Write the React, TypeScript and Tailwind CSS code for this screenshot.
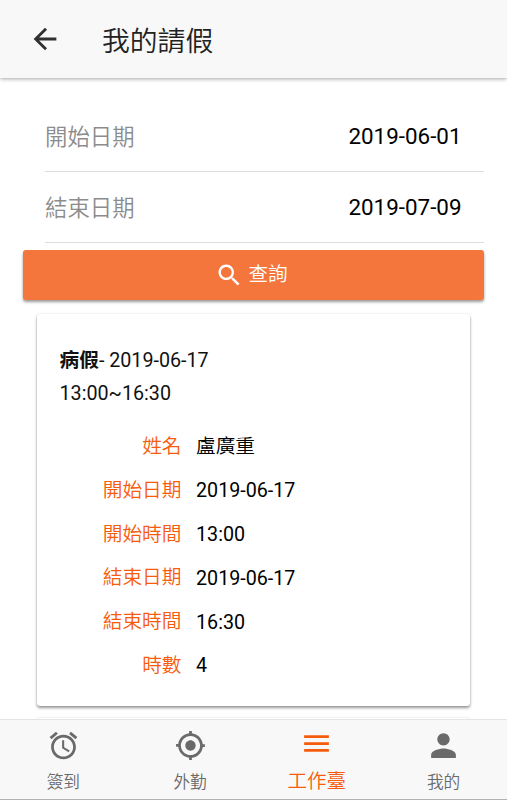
import type { ReactNode } from 'react';
import { IoMdAlarm, IoMdArrowBack, IoMdLocate, IoMdMenu, IoMdPerson, IoMdSearch } from 'react-icons/io';

const details = [
  ['姓名', '盧廣重'],
  ['開始日期', '2019-06-17'],
  ['開始時間', '13:00'],
  ['結束日期', '2019-06-17'],
  ['結束時間', '16:30'],
  ['時數', '4'],
];

function DateField({ label, value }: { label: string; value: string }) {
  return (
    <div className="flex h-[71.5px] items-center justify-between border-b-[1.5px] border-[#dedede] pr-[22.5px] text-[22.4px]">
      <span className="pt-[5px] font-[350] text-[#8c8c8c]">{label}</span>
      <span className="pt-[3px]">{value}</span>
    </div>
  );
}

function Tab({ icon, label, active = false }: { icon: ReactNode; label: string; active?: boolean }) {
  return (
    <a
      className={
        active
          ? 'flex flex-1 flex-col items-center pt-[5px] text-[19.5px] font-[350] text-[#f75c0c]'
          : 'flex flex-1 flex-col items-center pt-[7px] text-[16.7px] font-[350] text-[#6a6a6a]'
      }
    >
      <span className="flex h-9 shrink-0 items-center justify-center">{icon}</span>
      <span className={active ? 'leading-[42px]' : 'leading-[39px]'}>{label}</span>
    </a>
  );
}

export default function App() {
  return (
    <div className="flex h-[800px] w-full flex-col overflow-hidden bg-white font-['Roboto','Noto_Sans_CJK_TC',sans-serif] text-black">
      <header className="relative flex h-[78px] shrink-0 items-center bg-[#f8f8f8] pl-[28px] shadow-[0_1px_4px_rgba(0,0,0,0.35)]">
        <IoMdArrowBack size={36} color="#303030" className="w-[34px]" />
        <h1 className="ml-[40px] pt-[5px] text-[27.8px] font-[350] text-[#222]">我的請假</h1>
      </header>

      <main className="min-h-0 flex-1 overflow-hidden px-[23px] pt-[22px]">
        <section className="pl-[22px]">
          <DateField label="開始日期" value="2019-06-01" />
          <DateField label="結束日期" value="2019-07-09" />
        </section>

        <button className="mt-[6.5px] flex h-[50.5px] w-[461px] items-center justify-center gap-[5px] rounded-[3px] bg-[#f5763d] pr-[4px] text-[19.6px] text-white shadow-[0_2px_3px_rgba(0,0,0,0.4)]">
          <IoMdSearch size={28} />
          <span className="font-[350]">查詢</span>
        </button>

        <article className="mx-[14px] mt-[14px] h-[392px] w-[433px] rounded-[3px] px-[22.5px] pt-[31px] text-[19.7px] shadow-[0_2px_3px_rgba(0,0,0,0.4),0_0_2px_rgba(0,0,0,0.12)]">
          <p className="h-[32.5px] leading-[32px] text-[#111]"><b>病假</b>- 2019-06-17</p>
          <p className="h-[32.5px] leading-[32px] text-[#111]">13:00~16:30</p>
          <dl className="mt-[15px]">
            {details.map(([label, value]) => (
              <div key={label} className="flex h-[43.75px] items-center">
                <dt className="w-[122px] text-right font-[350] text-[#f75c0c]">{label}</dt>
                <dd className={label === '姓名' ? 'ml-[14.5px] font-[350]' : 'ml-[14.5px] pt-px'}>{value}</dd>
              </div>
            ))}
          </dl>
        </article>
        <div className="mx-[14px] mt-[12px] h-10 w-[433px] rounded-[3px] shadow-[0_0_2px_rgba(0,0,0,0.2)]" />
      </main>

      <nav className="flex h-[81px] shrink-0 border-b border-t border-b-[#b2b2b2] border-t-[#e4e4e4] bg-[#f8f8f8]">
        <Tab icon={<IoMdAlarm size={33} />} label="簽到" />
        <Tab icon={<IoMdLocate size={33} />} label="外勤" />
        <Tab icon={<IoMdMenu size={33} />} label="工作臺" active />
        <Tab icon={<IoMdPerson size={33} />} label="我的" />
      </nav>
    </div>
  );
}
